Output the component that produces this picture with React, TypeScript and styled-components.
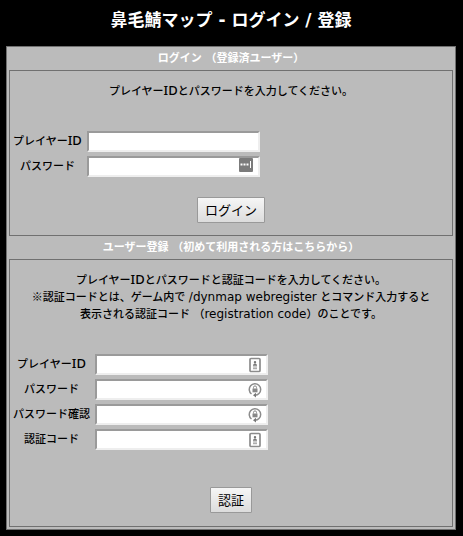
import React from "react";
import styled, { createGlobalStyle } from "styled-components";

const GlobalStyle = createGlobalStyle`
  * { box-sizing: border-box; }
  body {
    margin: 0;
    background: #000;
    color: #000;
    font-family: "DejaVu Sans", "Noto Sans CJK JP", sans-serif;
    font-size: 11px;
    line-height: 17px;
  }
`;

const Page = styled.main`
  padding: 0 7px 7px 6px;
`;

const Title = styled.h1`
  margin: 0;
  padding: 8px 0 14px;
  color: #fff;
  font-size: 17px;
  line-height: 24px;
  font-weight: 700;
  text-align: center;
`;

const Panel = styled.div`
  padding: 0 2px 2px;
  border: 1px solid #707070;
  background: #bbb;
`;

const SectionTitle = styled.h2`
  margin: 0;
  padding: 3px 0;
  color: #fff;
  font-size: 11px;
  line-height: 17px;
  font-weight: 700;
  text-align: center;
`;

const FormBox = styled.form`
  padding: 12px 2px;
  border: 1px solid #707070;
`;

const Message = styled.p`
  margin: 0 0 31px;
  font-weight: 500;
  text-align: center;
`;

const Abbreviation = styled.span`
  font-family: "Noto Sans", sans-serif;
  font-size: 13px;
  line-height: 1;
`;

const Latin = styled.span`
  font-size: 12px;
  line-height: 1;
`;

const Symbol = styled.span`
  font-family: "Noto Sans CJK JP", sans-serif;
  line-height: 1;
`;

const Fields = styled.div`
  display: grid;
  grid-template-columns: max-content 173px;
  column-gap: 4px;
  row-gap: 4px;
  align-items: center;
`;

const Label = styled.label`
  padding: 0 1px;
  font-weight: 500;
  text-align: center;
`;

const InputWrap = styled.div`
  position: relative;
  display: flex;
`;

const Input = styled.input`
  width: 100%;
  height: 21px;
  padding: 1px 20px 1px 2px;
  border: 2px solid;
  border-color: #9a9a9a #eee #eee #9a9a9a;
  border-radius: 0;
  background: #fff;
  font: inherit;
  outline: none;
`;

const Mark = styled.svg<{ $raised?: boolean }>`
  position: absolute;
  right: ${(p) => (p.$raised ? 7 : 6)}px;
  top: ${(p) => (p.$raised ? 2 : 3)}px;
  pointer-events: none;
`;

const Actions = styled.div<{ $last?: boolean }>`
  display: flex;
  justify-content: center;
  padding-top: ${(p) => (p.$last ? 37 : 20)}px;
  padding-bottom: ${(p) => (p.$last ? 1 : 0)}px;
`;

const Button = styled.button`
  height: 26px;
  padding: 0 7px;
  border: 1px solid #999;
  border-radius: 1px;
  background: linear-gradient(#f6f6f6, #dcdcdc);
  color: #000;
  font: 400 13px/20px "Noto Sans CJK JP", sans-serif;
`;

type IconKind = "dots" | "card" | "lock";

function FieldIcon({ kind }: { kind: IconKind }) {
  if (kind === "dots") {
    return (
      <Mark $raised width="14" height="14" viewBox="0 0 14 14" aria-hidden="true">
        <rect width="14" height="14" rx="1" fill="#7b7b7b" />
        <g fill="#fff">
          <rect x="1.5" y="5.500" width="2" height="2" />
          <rect x="4.500" y="5.500" width="2" height="2" />
          <rect x="7.500" y="5.500" width="2" height="2" />
          <rect x="11" y="3" width="1" height="7" />
        </g>
      </Mark>
    );
  }
  if (kind === "card") {
    return (
      <Mark width="14" height="16" viewBox="0 0 14 16" aria-hidden="true">
        <rect x="2" y="1.500" width="10" height="13" rx="1" fill="#fff" stroke="#8c8c8c" strokeWidth="1.700" />
        <circle cx="7" cy="5.300" r="1.200" fill="#777" />
        <path d="M5 8.800V8q.5-1.500 2-1.500T9 8v.8z" fill="#777" />
        <path d="M5 10h4M5 11.700h4" stroke="#999" />
      </Mark>
    );
  }
  return (
    <Mark width="14" height="16" viewBox="0 0 14 16" aria-hidden="true">
      <path d="M3.500 12A5.700 5.700 0 1 1 11 11.500Q9.500 13.200 7 13.200" fill="none" stroke="#8c8c8c" strokeWidth="1.500" />
      <path d="M8 10.800v4.800L5 13.200z" fill="#777" />
      <rect x="4.500" y="6.500" width="5" height="3.800" fill="#888" />
      <path d="M5.500 6.500V5.400a1.500 1.500 0 0 1 3 0v1.100" fill="none" stroke="#888" />
    </Mark>
  );
}

interface FieldProps {
  id: string;
  label: React.ReactNode;
  type?: string;
  icon?: IconKind;
}

function Field({ id, label, type = "text", icon }: FieldProps) {
  return (
    <>
      <Label htmlFor={id}>{label}</Label>
      <InputWrap>
        <Input id={id} name={id} type={type} />
        {icon && <FieldIcon kind={icon} />}
      </InputWrap>
    </>
  );
}

const playerId = <>プレイヤー<Abbreviation>ID</Abbreviation></>;

export default function App() {
  return (
    <>
      <GlobalStyle />
      <Page>
        <Title>鼻毛鯖マップ - ログイン / 登録</Title>
        <Panel>
          <SectionTitle>ログイン （登録済ユーザー）</SectionTitle>
          <FormBox>
            <Message>{playerId}とパスワードを入力してください。</Message>
            <Fields>
              <Field id="login-id" label={playerId} />
              <Field id="login-password" label="パスワード" type="password" icon="dots" />
            </Fields>
            <Actions>
              <Button type="button">ログイン</Button>
            </Actions>
          </FormBox>
          <SectionTitle>ユーザー登録 （初めて利用される方はこちらから）</SectionTitle>
          <FormBox>
            <Message>
              {playerId}とパスワードと認証コードを入力してください。<br />
              <Symbol>※</Symbol>認証コードとは、ゲーム内で <Latin>/dynmap webregister</Latin> とコマンド入力すると<br />
              表示される認証コード （<Latin>registration code</Latin>）のことです。
            </Message>
            <Fields>
              <Field id="register-id" label={playerId} icon="card" />
              <Field id="register-password" label="パスワード" type="password" icon="lock" />
              <Field id="register-confirm" label="パスワード確認" type="password" icon="lock" />
              <Field id="register-code" label="認証コード" icon="card" />
            </Fields>
            <Actions $last>
              <Button type="button">認証</Button>
            </Actions>
          </FormBox>
        </Panel>
      </Page>
    </>
  );
}
